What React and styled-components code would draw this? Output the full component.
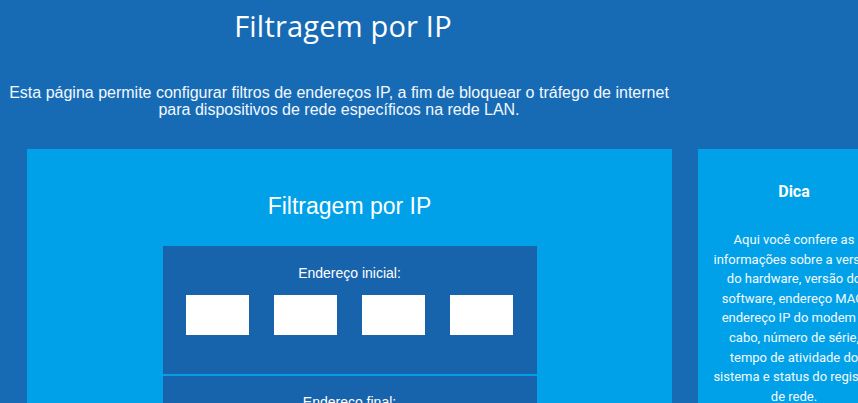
import React from 'react'
import styled, {createGlobalStyle} from 'styled-components'

const GlobalStyle = createGlobalStyle`
    html, body {
        margin: 0;
        padding: 0;
        background: #176bb5;
        overflow: hidden;
    }
`;

const Page = styled.div`
    display: grid;
    grid-template-columns: 686px 192px;
    grid-template-rows: 149px auto;
    column-gap: 12px;
    width: 890px;
    height: 403px;
    color: #ffffff;
`;

const Header = styled.header`
    grid-column: 1;
    text-align: center;
`;

const PageTitle = styled.h1`
    margin: 0;
    padding-top: 6px;
    font-family: "Open Sans", "Noto Sans", sans-serif;
    font-weight: 400;
    font-size: 29px;
    line-height: 40px;
    letter-spacing: 0.2px;
`;

const Intro = styled.p`
    margin: 38px 8px 0 0;
    font-family: "Liberation Sans", Arial, sans-serif;
    font-size: 16px;
    line-height: 17px;
    color: #f2f8ff;
`;

const MainPanel = styled.section`
    grid-column: 1;
    margin-left: 27px;
    width: 645px;
    background: #00a1e9;
    padding-top: 40px;
    display: flex;
    flex-direction: column;
    align-items: center;
`;

const PanelTitle = styled.h2`
    margin: 0 0 23px;
    font-family: "Liberation Sans", Arial, sans-serif;
    font-weight: 400;
    font-size: 23px;
    line-height: 34px;
`;

const AddressBox = styled.div`
    width: 374px;
    background: #1763ac;
    padding: ${p => p.$first ? '18px 0 39px' : '17px 0 39px'};
    margin-bottom: 2px;
    display: flex;
    flex-direction: column;
    align-items: center;
`;

const Label = styled.div`
    font-family: "Liberation Sans", Arial, sans-serif;
    font-size: 14px;
    line-height: 18px;
    margin-bottom: 13px;
`;

const Octets = styled.div`
    display: flex;
    gap: 25px;
`;

const Octet = styled.input`
    width: 63px;
    height: 40px;
    box-sizing: border-box;
    border: none;
    background: #ffffff;
    padding: 0;
    outline: none;
`;

const Sidebar = styled.aside`
    grid-column: 2;
    background: #00a1e9;
    padding: 33px 14px 0;
    text-align: center;
    font-family: Roboto, "Liberation Sans", sans-serif;
`;

const SideTitle = styled.h3`
    margin: 0;
    font-size: 16px;
    font-weight: 700;
    line-height: 20px;
`;

const SideText = styled.p`
    margin: 28px 0 0;
    font-size: 13px;
    line-height: 19.6px;
    color: #f4faff;
`;

function AddressRow({label, first}){
    return(
        <AddressBox $first={first}>
            <Label>{label}</Label>
            <Octets>
                <Octet type="text"/>
                <Octet type="text"/>
                <Octet type="text"/>
                <Octet type="text"/>
            </Octets>
        </AddressBox>
    )
}

export default function App(){
    return(
        <>
            <GlobalStyle/>
            <Page>
                <Header>
                    <PageTitle>Filtragem por IP</PageTitle>
                    <Intro>
                        Esta página permite configurar filtros de endereços IP, a fim de bloquear o tráfego de internet<br/>
                        para dispositivos de rede específicos na rede LAN.
                    </Intro>
                </Header>
                <MainPanel>
                    <PanelTitle>Filtragem por IP</PanelTitle>
                    <AddressRow label="Endereço inicial:" first/>
                    <AddressRow label="Endereço final:"/>
                </MainPanel>
                <Sidebar>
                    <SideTitle>Dica</SideTitle>
                    <SideText>
                        Aqui você confere as informações sobre a versão do hardware, versão do software, endereço MAC, endereço IP do modem a cabo, número de série, tempo de atividade do sistema e status do registro de rede.
                    </SideText>
                </Sidebar>
            </Page>
        </>
    )
}
